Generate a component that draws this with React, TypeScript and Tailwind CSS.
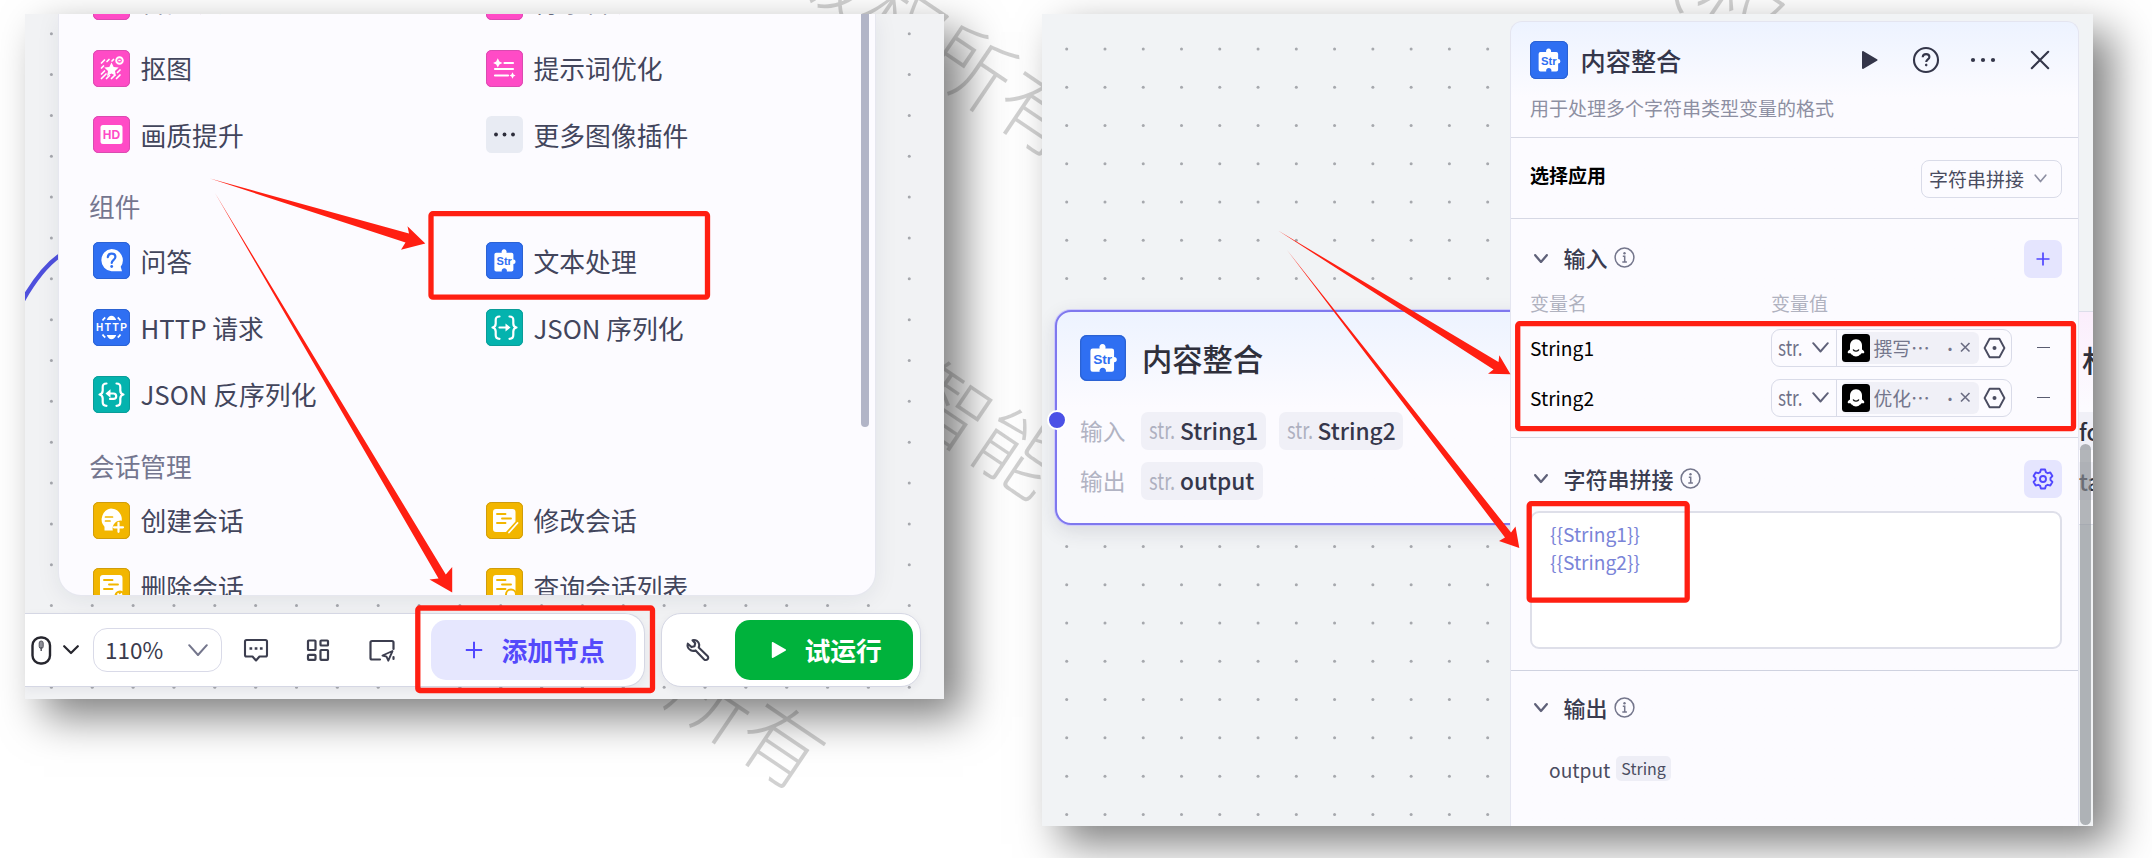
import React from "react";

type Dot = { x: number; y: number };

const grid = (x0: number, y0: number, step: number, cols: number, rows: number): Dot[] => {
  const out: Dot[] = [];
  for (let r = 0; r < rows; r++) for (let c = 0; c < cols; c++) out.push({ x: x0 + c * step, y: y0 + r * step });
  return out;
};

function Dots({ dots, w, h }: { dots: Dot[]; w: number; h: number }) {
  return (
    <svg className="absolute left-0 top-0" width={w} height={h}>
      {dots.map((d, i) => (
        <circle key={i} cx={d.x} cy={d.y} r="1.5" fill="#a6a8ad" />
      ))}
    </svg>
  );
}

/* ---------- node icons ---------- */

function Tile({ fill, edge, size = 37, children }: { fill: string; edge: string; size?: number; children?: React.ReactNode }) {
  return (
    <svg className="shrink-0" width={size} height={size} viewBox="0 0 37 37" fill="none">
      <rect width="37" height="37" rx="5.5" fill={fill} />
      <rect x="0.5" y="0.5" width="36" height="36" rx="5" stroke={edge} />
      {children}
    </svg>
  );
}

const Pink = ({ children }: { children?: React.ReactNode }) => (
  <Tile fill="#ff4bc6" edge="#d94bb0">{children}</Tile>
);
const Teal = ({ children }: { children?: React.ReactNode }) => (
  <Tile fill="#04b3ae" edge="#0a9c98">{children}</Tile>
);
const Yellow = ({ children }: { children?: React.ReactNode }) => (
  <Tile fill="#f2b600" edge="#cf9c0c">{children}</Tile>
);

const CutoutIcon = () => (
  <Pink>
    <g stroke="#fff" strokeWidth="1.7" strokeLinecap="round">
      <path d="M8.500 13l3-3M8.500 18l2-2M14 11.500l2-2M19 11l1.500-1.500M8.500 24l3-3M8.500 28.500l4.500-4.500M13.500 28.500l3-3M18.500 28.500l3-3M23.500 28.500l3.500-3.500M24.500 22.500l2.500-2.500" />
    </g>
    <path d="M18.500 12.500l2.200 4.500 5 .6-3.700 3.500 1 4.900-4.500-2.400-4.500 2.400 1-4.900-3.700-3.500 5-.6z" fill="#fff" />
    <circle cx="26.500" cy="10.500" r="3.300" stroke="#fff" strokeWidth="1.900" />
    <path d="M25.300 10.500h2.400" stroke="#fff" strokeWidth="1.400" />
  </Pink>
);
const HdIcon = () => (
  <Pink>
    <rect x="7.500" y="9" width="22" height="19" rx="2.500" fill="#fff" />
    <text x="18.500" y="23" textAnchor="middle" fill="#ff4bc6" className="font-['Liberation_Sans'] text-[12px] font-bold">HD</text>
  </Pink>
);
const PromptIcon = () => (
  <Pink>
    <g stroke="#fff" strokeWidth="2.200" strokeLinecap="round">
      <path d="M18.500 13h8.500M9 19h18M9 25.500h13" />
    </g>
    <path d="M11.800 8.300l1.600 3.100 3.100 1.600-3.100 1.600-1.600 3-1.600-3L7.100 13l3.100-1.600z" fill="#fff" />
    <path d="M26.500 22.300l1.100 2.100 1.900 1.100-1.900 1.100-1.100 2.100-1.100-2.100-1.900-1.100 1.900-1.100z" fill="#fff" />
  </Pink>
);
const MoreIcon = () => (
  <svg className="shrink-0" width="37" height="37" viewBox="0 0 37 37">
    <rect width="37" height="37" rx="5.500" fill="#e8ebf3" />
    <circle cx="10" cy="18.500" r="1.900" fill="#2d2d3a" />
    <circle cx="18.500" cy="18.500" r="1.900" fill="#2d2d3a" />
    <circle cx="27" cy="18.500" r="1.900" fill="#2d2d3a" />
  </svg>
);
const AskIcon = () => (
  <Tile fill="#2f6ff2" edge="#2b62d3">
    <path d="M18.500 7a11.300 11.300 0 0 1 9.200 17.800l1.300 4.500H18.500A11.200 11.200 0 0 1 18.500 7z" fill="#fff" />
    <path d="M14.800 15.200c.2-2.200 1.700-3.500 3.800-3.500 2.200 0 3.800 1.300 3.800 3.300 0 2.800-3.700 2.900-3.700 6" stroke="#2f6ff2" strokeWidth="2.200" strokeLinecap="round" />
    <circle cx="18.700" cy="24.500" r="1.400" fill="#2f6ff2" />
  </Tile>
);
const StrIcon = ({ size = 37 }: { size?: number }) => (
  <Tile fill="#2f6ff2" edge="#2b62d3" size={size}>
    <path
      d="M10.200 10.800h5.600a2.500 2.500 0 1 1 4.600 0h5.200a1.800 1.800 0 0 1 1.800 1.800v5a2.200 2.200 0 1 1 0 4.400v5.800a1.800 1.800 0 0 1-1.800 1.800h-4.800a2.600 2.600 0 1 0-5 0h-5.600a1.800 1.800 0 0 1-1.800-1.800V12.600A1.800 1.800 0 0 1 10.200 10.800z"
      fill="#fff"
    />
    <text x="10.600" y="23.200" fill="#2f6ff2" className="font-['Liberation_Sans'] text-[11px] font-bold">Str</text>
  </Tile>
);
const HttpIcon = () => (
  <Tile fill="#2f6ff2" edge="#2b62d3">
    <path d="M13.800 11c.8-2.600 2.600-4.300 4.700-4.300s3.900 1.700 4.700 4.300zM13.800 26c.8 2.600 2.600 4.300 4.700 4.300s3.900-1.700 4.700-4.300z" fill="#fff" />
    <path d="M9.500 11.500c.8-1.300 1.600-2.200 2.800-3M27.500 11.500c-.8-1.300-1.600-2.200-2.800-3M9.500 25.500c.8 1.300 1.600 2.200 2.800 3M27.500 25.500c-.8 1.300-1.600 2.200-2.800 3" stroke="#fff" strokeWidth="1.700" />
    <text x="3" y="22" fill="#fff" textLength="31" className="font-['Liberation_Sans'] text-[10px] font-bold">HTTP</text>
  </Tile>
);
const Braces = () => (
  <path
    d="M13.500 7.500c-2.800 0-3.800 1-3.800 3.500v3.500c0 2.500-1 3.600-3.200 4 2.200.4 3.200 1.500 3.200 4V26c0 2.500 1 3.800 3.800 3.800M23.500 7.500c2.800 0 3.800 1 3.800 3.500v3.500c0 2.500 1 3.600 3.200 4-2.200.4-3.200 1.500-3.200 4V26c0 2.500-1 3.800-3.800 3.800"
    stroke="#fff" strokeWidth="2.200" strokeLinecap="round" strokeLinejoin="round"
  />
);
const JsonOutIcon = () => (
  <Teal>
    <Braces />
    <path d="M13.500 18.500h8" stroke="#fff" strokeWidth="2.200" strokeLinecap="round" />
    <path d="M19.500 14.500l5 4-5 4z" fill="#fff" />
  </Teal>
);
const JsonInIcon = () => (
  <Teal>
    <Braces />
    <path d="M15 17.500h5.500a2.700 2.700 0 0 1 0 5.400h-3.500" stroke="#fff" strokeWidth="2.200" strokeLinecap="round" />
    <path d="M17.500 13.300l-5 4.200 5 4.200z" fill="#fff" />
  </Teal>
);
const NewChatIcon = () => (
  <Yellow>
    <path d="M18 6.500a11 11 0 0 1 10.800 12.200 8 8 0 0 0-9 9.800H11.500v-3.800A11 11 0 0 1 18 6.500z" fill="#fff" />
    <path d="M12.500 15h7M12.500 19h4.500" stroke="#f2b600" strokeWidth="1.700" strokeLinecap="round" />
    <path d="M25.500 20.800v9M21 25.300h9" stroke="#fff" strokeWidth="2.200" strokeLinecap="round" />
  </Yellow>
);
const Sheet = ({ d }: { d: string }) => (
  <>
    <path d={d} fill="#fff" />
    <path d="M11 12h8.500M16 16.500h9M11 21h8.500" stroke="#f2b600" strokeWidth="1.900" strokeLinecap="round" />
  </>
);
const EditChatIcon = () => (
  <Yellow>
    <Sheet d="M10 7h16.500a3 3 0 0 1 3 3v9.500L20 30H10a3 3 0 0 1-3-3V10a3 3 0 0 1 3-3z" />
    <path d="M23 30.500l8.500-9.500" stroke="#fff" strokeWidth="1.800" strokeLinecap="round" />
  </Yellow>
);
const DelChatIcon = () => (
  <Yellow>
    <Sheet d="M10 7h16.500a3 3 0 0 1 3 3v20H10a3 3 0 0 1-3-3V10a3 3 0 0 1 3-3z" />
    <circle cx="27" cy="28" r="5.500" fill="#f2b600" />
    <path d="M24.500 25.500l4.500 4.500M29 25.500l-4.500 4.500" stroke="#fff" strokeWidth="1.800" />
  </Yellow>
);
const FindChatIcon = () => (
  <Yellow>
    <Sheet d="M10 7h16.500a3 3 0 0 1 3 3v20H10a3 3 0 0 1-3-3V10a3 3 0 0 1 3-3z" />
    <circle cx="25" cy="26.500" r="5" fill="#fff" stroke="#f2b600" strokeWidth="2" />
  </Yellow>
);

/* ---------- small glyph icons ---------- */

function Chevron({ w, h, color, sw = 2 }: { w: number; h: number; color: string; sw?: number }) {
  return (
    <svg className="shrink-0" width={w} height={h} fill="none">
      <path d={`M1.200 1.200L${w / 2} ${h - 1.5}L${w - 1.2} 1.200`} stroke={color} strokeWidth={sw} strokeLinecap="round" strokeLinejoin="round" />
    </svg>
  );
}

const InfoIcon = () => (
  <svg className="shrink-0" width="21" height="21" fill="none">
    <circle cx="10.500" cy="10.500" r="9.400" stroke="#74768c" strokeWidth="1.500" />
    <circle cx="10.500" cy="6.200" r="1.200" fill="#74768c" />
    <path d="M8.800 9.300h1.900v5.500M8.300 15h4.600" stroke="#74768c" strokeWidth="1.500" />
  </svg>
);

/* ---------- left: node menu ---------- */

function Entry({ icon, label }: { icon: React.ReactNode; label: string }) {
  return (
    <div className="flex h-[37px] items-center gap-[11px] whitespace-nowrap">
      {icon}
      <span className="-mt-px text-[25.800px] leading-[37px] text-[#42455c]">{label}</span>
    </div>
  );
}

function Group({ title, children }: { title?: string; children: React.ReactNode }) {
  return (
    <section>
      {title && <h3 className="mb-[21px] mt-[37.800px] h-[30px] text-[25.700px] leading-[30px] text-[#74768f]">{title}</h3>}
      <div className="grid grid-cols-[393px_1fr] gap-y-[29.800px] pl-[3.500px]">{children}</div>
    </section>
  );
}

function NodeMenu() {
  return (
    <div className="relative ml-[34px] flex h-[581px] w-[816px] overflow-hidden rounded-b-[22px] bg-[#fcfbff] shadow-[0_0_0_1px_#e6e7ef,0_4px_24px_rgba(30,34,60,0.080)]">
      <div className="-mt-[31.200px] flex-1 pl-[30px]">
        <Group>
          <Entry icon={<Pink />} label="智能换脸" />
          <Entry icon={<Pink />} label="背景替换" />
          <Entry icon={<CutoutIcon />} label="抠图" />
          <Entry icon={<PromptIcon />} label="提示词优化" />
          <Entry icon={<HdIcon />} label="画质提升" />
          <Entry icon={<MoreIcon />} label="更多图像插件" />
        </Group>
        <Group title="组件">
          <Entry icon={<AskIcon />} label="问答" />
          <Entry icon={<StrIcon />} label="文本处理" />
          <Entry icon={<HttpIcon />} label="HTTP 请求" />
          <Entry icon={<JsonOutIcon />} label="JSON 序列化" />
          <Entry icon={<JsonInIcon />} label="JSON 反序列化" />
        </Group>
        <Group title="会话管理">
          <Entry icon={<NewChatIcon />} label="创建会话" />
          <Entry icon={<EditChatIcon />} label="修改会话" />
          <Entry icon={<DelChatIcon />} label="删除会话" />
          <Entry icon={<FindChatIcon />} label="查询会话列表" />
        </Group>
      </div>
      <div className="mr-[6px] h-[413px] w-[8px] rounded-b-full bg-[#b2b5c7]" />
    </div>
  );
}

function Toolbar() {
  return (
    <div className="relative mt-[18px] flex h-[74px] gap-[15.500px]">
      <div className="flex h-[74px] w-[620px] items-center rounded-r-[20px] border border-l-0 border-[#d5d7e4] bg-white shadow-[0_3px_10px_rgba(30,34,60,0.060)]">
        <svg className="ml-[6px]" width="21" height="29" viewBox="0 0 21 29" fill="none">
          <rect x="1.500" y="1.500" width="17.500" height="26" rx="8" stroke="#26262e" strokeWidth="2.400" />
          <rect x="8.200" y="5" width="4" height="7.500" rx="2" fill="#8d8e96" stroke="#55565f" />
          <path d="M10.200 11v4" stroke="#55565f" strokeWidth="1.500" />
        </svg>
        <div className="ml-[10.500px]"><Chevron w={16} h={9.500} color="#26262e" sw={2.200} /></div>
        <div className="ml-[14.500px] flex h-[44px] w-[129px] items-center justify-between rounded-[14px] border-[1.500px] border-[#d9dae8] pl-[11px] pr-[13px]">
          <span className="-mt-[2px] text-[22.500px] leading-[40px] text-[#3a3b4c]">110%</span>
          <Chevron w={20} h={12.500} color="#74768c" sw={2} />
        </div>
        <svg className="ml-[21px]" width="26" height="25" viewBox="0 0 26 25" fill="none" stroke="#3c3e4f" strokeWidth="2.100" strokeLinejoin="round">
          <path d="M3.500 2h19a1.500 1.500 0 0 1 1.500 1.500v13.500a1.500 1.500 0 0 1-1.500 1.500h-6L13 22.500l-3.500-4h-6A1.500 1.500 0 0 1 2 17V3.500A1.500 1.500 0 0 1 3.500 2z" />
          <path d="M6.500 10.500h2.700M11.700 10.500h2.700M16.900 10.500h2.700" strokeWidth="2.600" />
        </svg>
        <svg className="ml-[35.500px]" width="26" height="25" viewBox="0 0 26 25" fill="none" stroke="#3c3e4f" strokeWidth="2.200">
          <rect x="3" y="2.500" width="7.500" height="9.500" rx=".8" />
          <rect x="15.500" y="2.500" width="7.500" height="5" rx=".8" />
          <rect x="3" y="16.800" width="7.500" height="5" rx=".8" />
          <rect x="15.500" y="12" width="7.500" height="9.800" rx=".8" />
        </svg>
        <svg className="ml-[37px]" width="28" height="25" viewBox="0 0 28 25" fill="none" stroke="#3c3e4f" strokeWidth="2.200" strokeLinejoin="round" strokeLinecap="round">
          <path d="M12 21.500H4a1.500 1.500 0 0 1-1.500-1.500V4.500A1.500 1.500 0 0 1 4 3h20a1.500 1.500 0 0 1 1.500 1.500V11M25.500 19v2" />
          <path d="M24.500 13l-10 4.500 4 1.200 1.800 4z" strokeWidth="1.900" />
        </svg>
        <button className="ml-auto mr-[8px] flex h-[59.500px] w-[205px] items-center rounded-[15px] bg-[#e6e7fe] pl-[33.500px]">
          <svg width="18" height="18" fill="none"><path d="M9 .8v16.400M.8 9h16.400" stroke="#5147ff" strokeWidth="2" /></svg>
          <span className="-mt-[2px] ml-[19px] text-[25.800px] font-bold leading-[59px] text-[#5449fb]">添加节点</span>
        </button>
      </div>
      <div className="flex h-[74px] w-[260px] items-center rounded-[20px] border border-[#d5d7e4] bg-white shadow-[0_3px_10px_rgba(30,34,60,0.060)]">
        <svg className="ml-[22px]" width="27" height="25" viewBox="0 0 27 25" fill="none" stroke="#3c3e4f" strokeWidth="2.100" strokeLinejoin="round">
          <path d="M8.500 2.200c3.200-.7 6.300 1.200 6.700 4.400.1 1-.1 1.900-.5 2.800l8.800 8.600a2.300 2.300 0 0 1-3.300 3.400l-8.600-9c-3.300 1.300-7-.5-7.900-3.700-.3-1-.2-2 .1-3l3.700 3.400 3-.9.7-2.900z" />
        </svg>
        <button className="ml-auto mr-[6.500px] flex h-[59.500px] w-[178px] items-center rounded-[15px] bg-[#00b23c] pl-[35.500px]">
          <svg width="16" height="18"><path d="M.8 2v14c0 .8.800 1.200 1.500.8L14.500 9.800c.7-.4.7-1.200 0-1.600L2.300 1.200C1.600.800.800 1.200.800 2z" fill="#fff" /></svg>
          <span className="-mt-[2px] ml-[18px] text-[25.800px] font-bold leading-[59px] text-white">试运行</span>
        </button>
      </div>
    </div>
  );
}

function MenuShot() {
  return (
    <div className="relative flex h-[685px] w-[919px] shrink-0 flex-col overflow-hidden bg-[#f1f2f4]">
      <Dots dots={grid(26.400, 19.700, 40.850, 22, 17)} w={919} h={685} />
      <svg className="absolute left-0 top-[230px]" width="40" height="70" fill="none">
        <path d="M-2 56C9 37 20 22 34 12" stroke="#4f50dd" strokeWidth="4.600" />
      </svg>
      <NodeMenu />
      <Toolbar />
    </div>
  );
}

/* ---------- right: canvas + drawer ---------- */

function StrTag({ big }: { big?: boolean }) {
  return big ? (
    <span className="-mt-[3px] w-[31px] shrink-0"><span className="inline-block origin-left scale-x-[0.800] text-[23px] leading-[36px] text-[#aeb0c0]">str.</span></span>
  ) : (
    <span className="-mt-[2px] w-[34px] shrink-0"><span className="inline-block origin-left scale-x-[0.780] text-[22px] leading-[35px] text-[#6f7188]">str.</span></span>
  );
}

function VarChip({ name, w }: { name: string; w: string }) {
  return (
    <span className={`flex h-[38px] items-center whitespace-nowrap rounded-[7px] bg-[#f0f0f7] pl-[8px] ${w}`}>
      <StrTag big />
      <span className="text-[22.700px] font-medium leading-[38px] text-[#35374b]">{name}</span>
    </span>
  );
}

function NodeCard() {
  return (
    <div className="absolute left-[13px] top-[296px] h-[215px] w-[500px] rounded-[16px] border-2 border-[#7f78ee] bg-[#fcfbff] bg-linear-to-b from-[#edf3ff] to-[#fcfbff] to-45% pl-[23px] pt-[23px] shadow-[0_0_0_1px_#cfccfb,0_6px_20px_rgba(30,34,60,0.120)]">
      <div className="flex items-center gap-[16px]">
        <StrIcon size={46} />
        <h2 className="-mt-px text-[30.300px] font-medium leading-[46px] text-[#2f303c]">内容整合</h2>
      </div>
      <div className="mt-[30.500px] flex items-center">
        <span className="w-[61px] text-[22.700px] leading-[36px] text-[#b1b3c3]">输入</span>
        <VarChip name="String1" w="w-[125px] mr-[12.500px]" />
        <VarChip name="String2" w="w-[124px]" />
      </div>
      <div className="mt-[12.500px] flex items-center">
        <span className="-mt-[1px] w-[61px] text-[22.700px] leading-[36px] text-[#b1b3c3]">输出</span>
        <VarChip name="output" w="w-[122px]" />
      </div>
      <i className="absolute -left-[10px] top-[97.500px] size-[20px] rounded-full border-[2.500px] border-white bg-[#4b51e6]" />
    </div>
  );
}

function NextNode() {
  return (
    <div className="absolute left-[1037px] top-[297px] h-[214px] w-[60px] whitespace-nowrap border-y border-[#dcdeea] bg-[#fcfbff] bg-linear-to-b from-[#fbeefc] to-[#fcfbff] to-45% text-[#2f303c]">
      <div className="mt-[24px] pl-[3px] text-[30px] font-medium leading-[46px]">材料</div>
      <div className="mt-[30px] h-[38px] bg-[#f0f0f7] text-[22.500px] font-medium leading-[38px]">fo</div>
      <div className="mt-[12px] h-[38px] bg-[#f0f0f7] text-[22.500px] font-medium leading-[38px]">ta</div>
    </div>
  );
}

function SectionHead({ title, action }: { title: string; action?: React.ReactNode }) {
  return (
    <div className="flex h-[38px] items-center pl-[4px]">
      <Chevron w={14} h={9.500} color="#5f6179" sw={2.300} />
      <span className="-mt-[3px] ml-[15.500px] text-[22px] font-medium leading-[38px] text-[#3a3c50]">{title}</span>
      <span className="-mt-[2px] ml-[6.500px]"><InfoIcon /></span>
      {action && <button className="ml-auto flex size-[38px] items-center justify-center rounded-[7px] bg-[#e5e5fe]">{action}</button>}
    </div>
  );
}

function InputRow({ name, value }: { name: string; value: string }) {
  return (
    <div className="flex h-[38px] items-center">
      <span className="w-[241px] text-[19.200px] leading-[38px] text-black">{name}</span>
      <div className="flex h-[38px] w-[240.500px] items-center rounded-[9px] border-[1.500px] border-[#d9dbe8] pl-[6px]">
        <StrTag />
        <Chevron w={17} h={11} color="#5f6179" sw={1.900} />
        <i className="ml-[6.500px] h-full w-[1.500px] bg-[#d9dbe8]" />
        <div className="ml-[4.500px] flex h-[32px] w-[137px] shrink-0 items-center rounded-[6px] bg-[#f0f0f7]">
          <svg className="shrink-0" width="28" height="28" viewBox="0 0 28 28">
            <rect width="28" height="28" rx="3.500" fill="#000" />
            <path d="M14 5.200c4 0 6 3 6 6.600v3.600c1.700.9 2.400 1.900 2.300 3-.2 1-1.600 1-2.700.5-.3 1-.9 1.600-1.900 1.900-.6 1-2.100 1.600-3.700 1.600s-3.100-.6-3.700-1.600c-1-.3-1.600-.9-1.900-1.900-1.100.5-2.500.5-2.700-.5-.1-1.100.6-2.100 2.300-3v-3.600c0-3.600 2-6.600 6-6.600z" fill="#fff" />
            <path d="M11.200 15.500c.8 2.200 4.800 2.200 5.600 0" stroke="#000" strokeWidth="1.400" fill="none" />
          </svg>
          <span className="ml-[4px] w-[69px] shrink-0 whitespace-nowrap text-[18.800px] leading-[32px] text-[#74768c]">{value}⋯</span>
          <span className="mt-[3px] w-[6px] shrink-0 text-[15px] leading-[28px] text-[#74768c]">·</span>
          <svg className="ml-[11px] shrink-0" width="11" height="11"><path d="M1 1l8.500 8.500M9.500 1L1 9.500" stroke="#6a6c82" strokeWidth="1.600" /></svg>
        </div>
        <svg className="ml-[4px] shrink-0" width="23" height="22" viewBox="0 0 23 22" fill="none">
          <path d="M6.600 1.800h9.800l5 9.200-5 9.200H6.600L1.600 11z" stroke="#4a4c60" strokeWidth="1.900" strokeLinejoin="round" />
          <circle cx="11.500" cy="11" r="2" fill="#4a4c60" />
        </svg>
      </div>
      <i className="ml-[25.500px] h-[1.500px] w-[13px] bg-[#5a5c70]" />
    </div>
  );
}

function Drawer() {
  return (
    <div className="relative ml-[468px] mt-[6.500px] h-[806px] w-[569px] rounded-t-[12px] border border-b-0 border-[#e4e5f0] bg-[#fcfbff] bg-linear-to-b from-[#edf3ff] to-[#fcfbff] to-[75px]">
      <div className="h-[115px] px-[19px] pt-[19.500px]">
        <div className="flex h-[38px] items-center">
          <StrIcon size={38} />
          <h2 className="-mt-px ml-[12.500px] text-[25.200px] font-medium leading-[38px] text-[#34364a]">内容整合</h2>
          <svg className="ml-[180px]" width="18" height="20"><path d="M1 2v16c0 .8.800 1.200 1.500.7L16 10.800c.7-.4.7-1.200 0-1.600L2.500 1.300C1.800.800 1 1.200 1 2z" fill="#34364a" /></svg>
          <svg className="ml-[33px]" width="28" height="28" fill="none" stroke="#34364a">
            <circle cx="14" cy="14" r="12" strokeWidth="2.100" />
            <path d="M10.700 11.200c.1-1.900 1.500-3.100 3.400-3.100s3.300 1.200 3.300 2.900c0 2.400-3.200 2.500-3.200 5.100" strokeWidth="2.100" />
            <circle cx="14.200" cy="19" r=".9" fill="#34364a" strokeWidth="1" />
          </svg>
          <svg className="ml-[30px]" width="26" height="6" fill="#34364a">
            <circle cx="3" cy="3" r="2.100" /><circle cx="13" cy="3" r="2.100" /><circle cx="23" cy="3" r="2.100" />
          </svg>
          <svg className="ml-[34px]" width="20" height="20"><path d="M1.800 1.800l16.400 16.400M18.200 1.800l-16.400 16.400" stroke="#34364a" strokeWidth="2.100" strokeLinecap="round" /></svg>
        </div>
        <p className="mt-[13px] whitespace-nowrap text-[19px] leading-[32px] text-[#8d8fa2]">用于处理多个字符串类型变量的格式</p>
      </div>
      <div className="flex h-[81px] justify-between border-t-[1.500px] border-[#d6d8e4] pl-[19px] pr-[16px]">
        <span className="mt-[20px] text-[19px] font-bold leading-[34px] text-black">选择应用</span>
        <span className="mt-[22px] flex h-[38px] w-[141px] items-center justify-between rounded-[8px] border-[1.500px] border-[#d9dbe8] pl-[7px] pr-[14.500px] text-[19px] leading-[33px] text-[#4a4c60]">
          字符串拼接
          <Chevron w={13} h={9} color="#8d8fa2" sw={1.700} />
        </span>
      </div>
      <div className="h-[219px] border-t-[1.500px] border-[#d6d8e4] pl-[19px] pr-[16px] pt-[21px]">
        <SectionHead title="输入" action={<svg width="14" height="14"><path d="M7 .5v13M.5 7h13" stroke="#5147ff" strokeWidth="1.700" /></svg>} />
        <div className="mt-[10.500px] flex h-[30px] text-[19px] leading-[30px] text-[#b0b2bf]">
          <span className="w-[241px]">变量名</span>
          <span>变量值</span>
        </div>
        <div className="mt-[10.500px] flex flex-col gap-[12px]">
          <InputRow name="String1" value="撰写" />
          <InputRow name="String2" value="优化" />
        </div>
      </div>
      <div className="h-[233.500px] border-t-[1.500px] border-[#d6d8e4] pl-[19px] pr-[16px] pt-[22.500px]">
        <SectionHead
          title="字符串拼接"
          action={
            <svg width="22" height="22" viewBox="0 0 22 22" fill="none" stroke="#5147ff" strokeWidth="1.900" strokeLinejoin="round">
              <path d="M8.900 1.500h4.200l.7 2.600 1.900 1.100 2.600-.7 2.100 3.600-1.900 1.900v2l1.900 1.900-2.100 3.600-2.600-.7-1.900 1.100-.7 2.600H8.900l-.7-2.600-1.900-1.100-2.600.7-2.100-3.600L3.500 12v-2L1.600 8.100l2.100-3.600 2.600.7 1.900-1.100z" />
              <circle cx="11" cy="11" r="3" />
            </svg>
          }
        />
        <div className="mt-[13px] h-[138px] rounded-[9px] border-2 border-[#dedfe9] bg-white pl-[18px] pt-[8px] text-[19.200px] leading-[27.700px] text-[#7a84d8]">
          <div>{"{{String1}}"}</div>
          <div>{"{{String2}}"}</div>
        </div>
      </div>
      <div className="border-t-[1.500px] border-[#cfd2e0] pl-[19px] pr-[16px] pt-[18px]">
        <SectionHead title="输出" />
        <div className="mt-[28px] flex items-center pl-[19px] text-[19.200px] leading-[30px] text-[#4a4c60]">
          <span>output</span>
          <span className="-mt-[3px] ml-[6px] h-[25px] rounded-[5px] bg-[#eeeef6] px-[5px] text-[16px] leading-[24px]">String</span>
        </div>
      </div>
    </div>
  );
}

function CanvasShot() {
  return (
    <div className="relative flex h-[812px] w-[1051px] shrink-0 overflow-hidden bg-[#f1f3f5]">
      <Dots dots={grid(24.700, 35, 38.270, 12, 21)} w={1051} h={812} />
      <NodeCard />
      <NextNode />
      <Drawer />
      <div className="absolute left-[1038px] top-[430px] h-[381px] w-[11px] rounded-full bg-[#8b8f94]/65" />
    </div>
  );
}

/* ---------- annotations ---------- */

function Annotations() {
  return (
    <svg className="absolute left-0 top-0" width="2152" height="858" fill="none">
      <g stroke="#ff1f12" strokeWidth="5.300">
        <rect x="431" y="213.700" width="276.500" height="83.500" rx="2" />
        <rect x="417.800" y="608" width="234.700" height="82.500" rx="2" />
        <rect x="1517.700" y="323.700" width="555.800" height="105" rx="2" />
        <rect x="1529.200" y="503.700" width="158" height="96.500" rx="2" />
      </g>
      <g fill="#ff1f12">
        <path d="M210 178.500L409 233.500L407.500 226.300L425.300 243.500L401 249.700L405.500 242.500Z" />
        <path d="M215 193L445.800 574.500L452.200 567L452.200 592.500L429.500 579.500L438.500 578.500Z" />
        <path d="M1278 230.500L1498.500 362L1499.300 355.300L1510.500 374.300L1488 373.800L1493.500 369.500Z" />
        <path d="M1287 250L1511 532.500L1515.500 526.500L1519.300 548L1499 541L1505 537.500Z" />
      </g>
    </svg>
  );
}

function Watermark({ text, at }: { text: string; at: string }) {
  return (
    <span className={`absolute origin-left rotate-[34deg] whitespace-nowrap text-[82px] font-light leading-[82px] text-black/18 ${at}`}>{text}</span>
  );
}

export default function App() {
  return (
    <div className="relative h-[858px] w-[2152px] overflow-hidden bg-white font-['Noto_Sans_CJK_SC',sans-serif]">
      <div className="absolute left-[25px] top-[14px] h-[685px] w-[919px] shadow-[19px_18px_40px_rgba(0,0,0,0.500)]" />
      <div className="absolute left-[1042px] top-[14px] h-[812px] w-[1051px] shadow-[19px_18px_40px_rgba(0,0,0,0.500)]" />
      <Watermark text="版权所有" at="left-[804px] top-[-92px]" />
      <Watermark text="智能" at="left-[918px] top-[340px]" />
      <Watermark text="所有" at="left-[682px] top-[632px]" />
      <Watermark text="版权" at="left-[1640px] top-[-104px]" />
      <main className="flex items-start gap-[98px] pl-[25px] pt-[14px]">
        <MenuShot />
        <CanvasShot />
      </main>
      <Annotations />
    </div>
  );
}
